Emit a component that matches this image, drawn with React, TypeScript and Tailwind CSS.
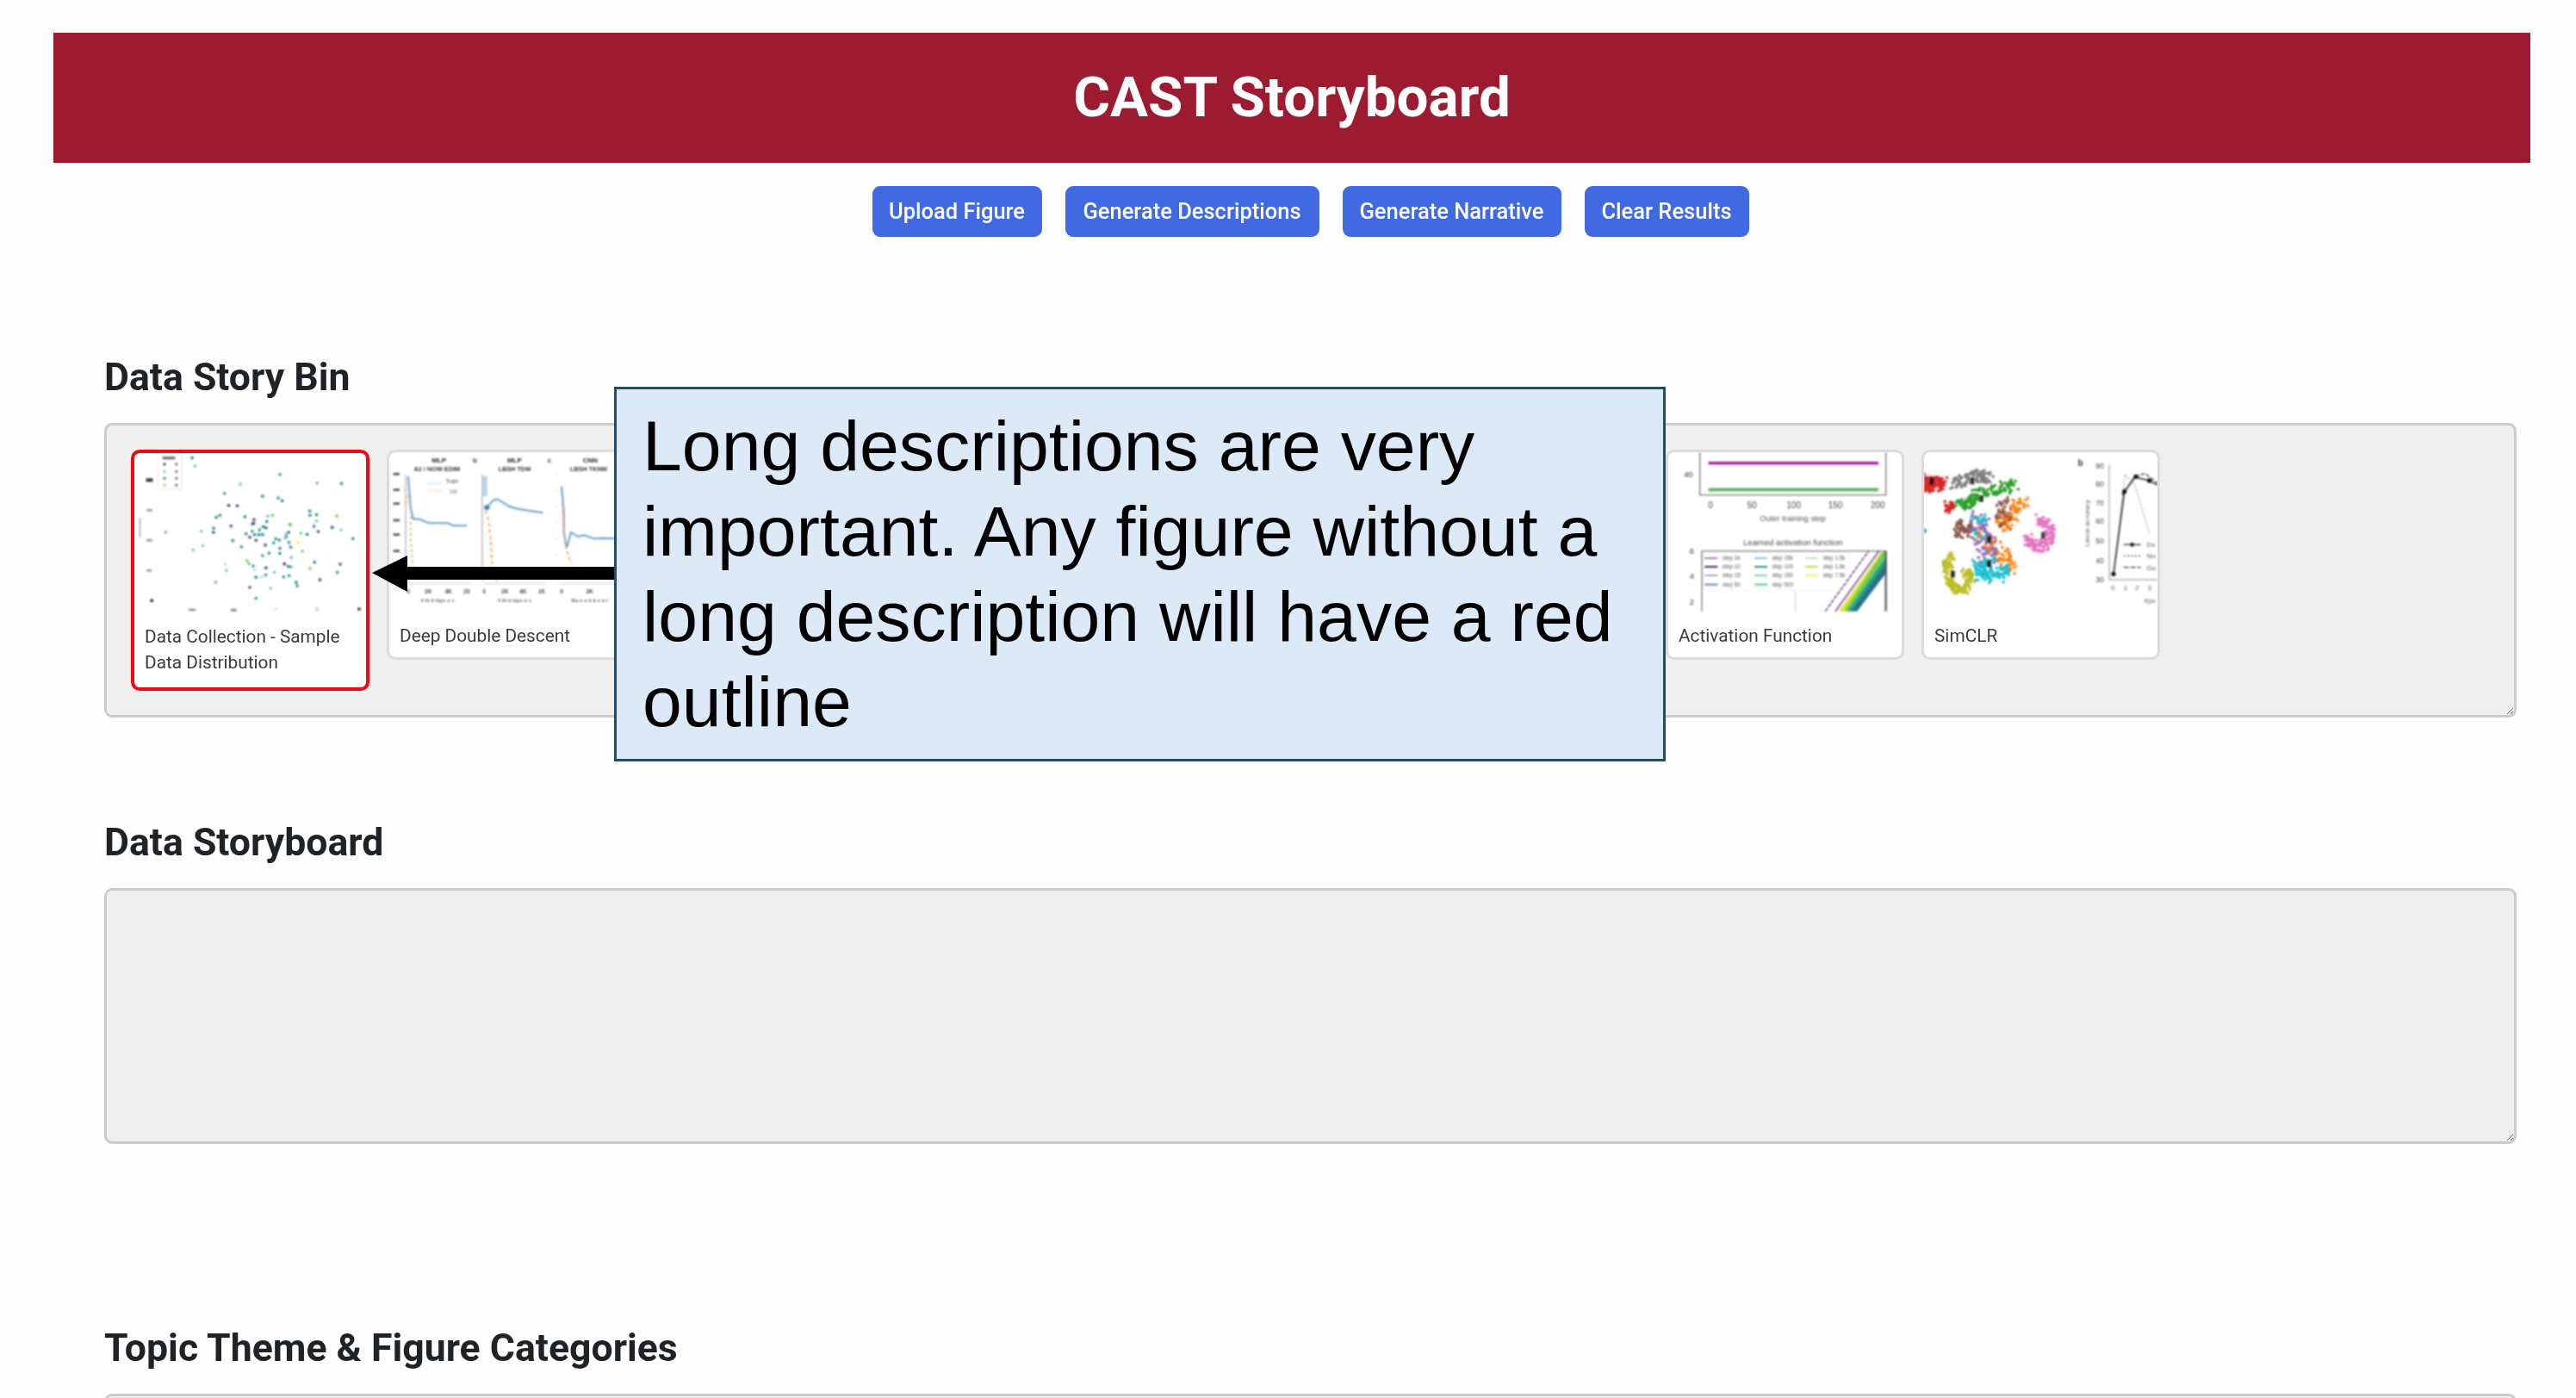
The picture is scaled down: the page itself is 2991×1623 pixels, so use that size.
import React from "react";

const C: Record<string, string> = {
  p: "#482878", b: "#3e4989", c: "#26828e", t: "#1f9e89", g: "#7cc4b4", l: "#6ece58", y: "#fde725", s: "#c3dbe0", m: "#8da0c4",
};

const POINTS: [number, number, string][] = [
  [220,38,"c"],[230,67,"g"],[529,96,"t"],[390,130,"g"],[660,127,"m"],[746,128,"c"],[334,163,"t"],[468,173,"c"],[523,179,"t"],[537,189,"c"],
  [349,205,"p"],[379,207,"b"],[318,240,"c"],[305,247,"c"],[406,245,"c"],[438,255,"b"],[486,243,"g"],[503,240,"l"],[634,225,"c"],[635,240,"c"],
  [658,238,"c"],[658,260,"g"],[729,242,"l"],[483,262,"c"],[565,272,"t"],[433,270,"b"],[357,278,"b"],[649,279,"c"],[713,283,"b"],[744,291,"g"],
  [127,299,"m"],[252,296,"g"],[296,285,"c"],[295,300,"b"],[431,296,"t"],[457,291,"t"],[470,280,"c"],[480,284,"b"],[410,305,"c"],[423,317,"b"],
  [440,308,"c"],[455,308,"c"],[468,308,"c"],[560,300,"b"],[552,315,"c"],[603,303,"l"],[625,307,"c"],[664,297,"b"],[786,322,"c"],[363,329,"c"],
  [445,328,"b"],[478,345,"b"],[514,323,"t"],[507,337,"t"],[527,327,"c"],[561,336,"t"],[593,336,"y"],[567,352,"c"],[258,347,"g"],[224,362,"g"],
  [394,351,"t"],[529,356,"c"],[491,373,"t"],[468,382,"t"],[529,374,"c"],[608,366,"l"],[569,388,"m"],[413,400,"l"],[420,410,"l"],[435,418,"t"],
  [440,432,"s"],[545,411,"p"],[480,425,"b"],[558,420,"t"],[567,421,"t"],[651,405,"c"],[741,412,"b"],[635,427,"l"],[731,441,"t"],[337,412,"s"],
  [341,434,"g"],[510,440,"g"],[479,450,"t"],[445,458,"c"],[465,458,"s"],[542,457,"t"],[561,452,"t"],[586,476,"c"],[590,488,"c"],[670,467,"b"],
  [303,476,"m"],[423,494,"b"],[496,497,"g"],[445,532,"t"],[550,305,"g"],[437,268,"b"],[565,275,"l"],[548,320,"g"],
];

function Scatter() {
  return (
    <svg viewBox="18 21 813 585" className="block w-[269px] h-[193px] blur-[1px]">
      <rect x="100" y="25" width="85" height="125" fill="none" stroke="#e4e4e4" strokeWidth="3" />
      {[60, 86, 110, 134].map((y, i) => (
        <g key={y}>
          <circle cx="123" cy={y} r="5" fill={["#482878", "#9db5d0", "#1f9e89", "#8fd860"][i]} />
          <rect x="160" y={y - 5} width="9" height="10" fill="#888" />
        </g>
      ))}
      <rect x="116" y="34" width="44" height="9" fill="#666" />
      {POINTS.map(([x, y, k], i) => (
        <circle key={i} cx={x} cy={y} r="5.5" fill={C[k]} />
      ))}
      <rect x="58" y="110" width="24" height="12" fill="#333" />
      <rect x="60" y="218" width="20" height="8" fill="#999" />
      <rect x="60" y="324" width="20" height="8" fill="#999" />
      <rect x="60" y="430" width="18" height="8" fill="#999" />
      <rect x="34" y="250" width="5" height="68" fill="#aaa" />
      <circle cx="78" cy="540" r="6" fill="#333" />
      <rect x="208" y="569" width="24" height="7" fill="#888" />
      <rect x="356" y="569" width="20" height="9" fill="#888" />
      <circle cx="515" cy="570" r="3" fill="#999" />
      <rect x="654" y="562" width="12" height="16" fill="#ddd" />
      <circle cx="808" cy="570" r="6" fill="#333" />
    </svg>
  );
}

function Descent() {
  return (
    <svg viewBox="22 21 813 585" className="block w-[271px] h-[195px] blur-[1px] font-['Liberation_Sans',sans-serif]">
      {[[195, "MLP"], [458, "MLP"], [722, "CNN"]].map(([x, s]) => (
        <text key={String(x)} x={x as number} y="58" textAnchor="middle" fontSize="24" fontWeight="700" fill="#222">{s as string}</text>
      ))}
      {[[188, "A2 / NOW EDIM"], [458, "LBSH TDM"], [716, "LBSH TKNM"]].map(([x, s]) => (
        <text key={String(x)} x={x as number} y="88" textAnchor="middle" fontSize="22" fontWeight="700" fill="#333">{s as string}</text>
      ))}
      <text x="320" y="58" textAnchor="middle" fontSize="24" fontWeight="700" fill="#333">b</text>
      <text x="580" y="58" textAnchor="middle" fontSize="24" fontWeight="700" fill="#333">c</text>
      {[97, 152, 200, 258, 308, 365].map((y) => (
        <rect key={y} x="36" y={y - 4} width="22" height="8" fill="#555" />
      ))}
      <rect x="76" y="100" width="6" height="370" fill="#c8c8c8" />
      <rect x="343" y="100" width="6" height="370" fill="#c8c8c8" />
      <rect x="345" y="104" width="18" height="70" fill="#b9d4ea" />
      <line x1="606" y1="95" x2="606" y2="470" stroke="#ddd" strokeWidth="3" strokeDasharray="6 50" />
      <path d="M155 130H205" stroke="#dce9f3" strokeWidth="5" />
      <path d="M155 155H205" stroke="#fbe3d0" strokeWidth="5" />
      <text x="240" y="130" textAnchor="middle" fontSize="20" fill="#555">Train</text>
      <text x="245" y="164" textAnchor="middle" fontSize="20" fill="#777">Val</text>
      <polyline points="88,105 96,210 105,253 130,255 160,268 225,268 245,277 292,277" fill="none" stroke="#5f9fd2" strokeWidth="6" />
      <polyline points="88,170 97,230 97,330 103,410 115,470" fill="none" stroke="#f6b27c" strokeWidth="6" strokeDasharray="10 9" />
      <polyline points="360,215 385,187 400,185 440,210 470,218 510,225 558,232" fill="none" stroke="#5f9fd2" strokeWidth="6" />
      <circle cx="362" cy="214" r="9" fill="#3f85c0" />
      <polyline points="358,225 368,260 375,320 380,410 397,470" fill="none" stroke="#f6a468" strokeWidth="6" strokeDasharray="12 10" />
      <polyline points="622,140 630,230 630,300 640,355 655,300 680,315 700,310 735,322 770,320 810,322" fill="none" stroke="#5f9fd2" strokeWidth="6" />
      <polyline points="625,200 632,320 640,360 655,410" fill="none" stroke="#f6a468" strokeWidth="6" strokeDasharray="12 9" />
      <path d="M85 478H310M352 478H565M615 478H820" stroke="#ccc" strokeWidth="3" />
      {[[88, "0"], [158, "2K"], [228, "4K"], [292, "20"], [352, "0"], [425, "2K"], [488, "4K"], [552, "20"], [622, "0"], [720, "2K"]].map(([x, s]) => (
        <text key={String(x)} x={x as number} y="512" textAnchor="middle" fontSize="20" fontWeight="700" fill="#444">{s as string}</text>
      ))}
      {[[190, "4 th b lays e s"], [458, "4 th b lays e s"], [720, "Ba n e h b e a t"]].map(([x, s]) => (
        <text key={String(x)} x={x as number} y="544" textAnchor="middle" fontSize="18" fontWeight="700" fill="#666">{s as string}</text>
      ))}
    </svg>
  );
}

function Activation() {
  const legend: [number, number, string, string][] = [
    [145, 390, "#a77fb5", "step 1k"], [145, 420, "#46216f", "step 10"], [145, 450, "#a69bd0", "step 15"], [145, 482, "#5a7fa8", "step 50"],
    [318, 390, "#8fbfd0", "step 15k"], [318, 420, "#1f8e8e", "step 100"], [318, 450, "#7fd0bb", "step 150"], [318, 482, "#52c585", "step 500"],
    [495, 390, "#bfe8a8", "step 1.5k"], [495, 420, "#c3dc26", "step 1.8k"], [495, 450, "#fdea70", "step 7.5k"],
  ];
  return (
    <svg viewBox="18 21 813 585" className="block w-[271px] h-[195px] blur-[1px] font-['Liberation_Sans',sans-serif]">
      <path d="M128 15V170H778M776 15V170" fill="none" stroke="#777" strokeWidth="4" />
      <rect x="158" y="54" width="592" height="10" fill="#9c1f9e" />
      <rect x="158" y="146" width="592" height="11" fill="#58b05e" />
      <text x="88" y="108" textAnchor="middle" fontSize="28" fill="#333">40</text>
      {[[165, "0"], [310, "50"], [455, "100"], [600, "150"], [748, "200"]].map(([x, s]) => (
        <text key={String(x)} x={x as number} y="216" textAnchor="middle" fontSize="30" fill="#444">{s as string}</text>
      ))}
      <text x="452" y="262" textAnchor="middle" fontSize="28" fill="#555">Outer training step</text>
      <text x="452" y="346" textAnchor="middle" fontSize="29" fill="#444">Learned activation function</text>
      <path d="M135 575V365H778V575" fill="none" stroke="#777" strokeWidth="4" />
      <line x1="460" y1="500" x2="460" y2="575" stroke="#ccc" strokeWidth="3" />
      <text x="100" y="376" textAnchor="middle" fontSize="28" fill="#333">6</text>
      <text x="100" y="461" textAnchor="middle" fontSize="28" fill="#333">4</text>
      <text x="100" y="551" textAnchor="middle" fontSize="28" fill="#333">2</text>
      <rect x="140" y="372" width="510" height="130" fill="#fff" stroke="#eee" strokeWidth="2" />
      {legend.map(([x, y, c, s]) => (
        <g key={s}>
          <line x1={x} y1={y} x2={x + 45} y2={y} stroke={c} strokeWidth="6" />
          <text x={x + 62} y={y + 7} fontSize="19" fill="#555">{s}</text>
        </g>
      ))}
      <line x1="565" y1="575" x2="716" y2="365" stroke="#7a4a9a" strokeWidth="5" strokeDasharray="14 4" />
      <line x1="600" y1="575" x2="752" y2="365" stroke="#7a4a9a" strokeWidth="5" />
      <polygon points="612,575 632,575 778,370 778,365 762,365" fill="#dfe32a" />
      <polygon points="630,575 645,575 778,390 778,365 768,365" fill="#6ecb5c" />
      <polygon points="643,575 658,575 778,410 778,385" fill="#22a284" />
      <polygon points="656,575 676,575 778,440 778,405" fill="#2b6f8e" />
      <rect x="772" y="365" width="6" height="210" fill="#555" opacity="0.8" />
    </svg>
  );
}

function rng(seed: number) {
  let s = seed;
  return () => {
    s = (s * 16807) % 2147483647;
    return s / 2147483647;
  };
}

type Cl = { c: string; r: number; n: number; p: [number, number][] };
const CLUSTERS: Cl[] = [
  { c: "#8c564b", r: 24, n: 45, p: [[300, 190], [280, 230], [290, 270]] },
  { c: "#ff7f0e", r: 26, n: 70, p: [[350, 190], [320, 240], [280, 275]] },
  { c: "#ff7f0e", r: 28, n: 45, p: [[285, 370], [315, 420], [240, 350]] },
  { c: "#8c564b", r: 20, n: 60, p: [[118, 268], [170, 295], [130, 310]] },
  { c: "#2ca02c", r: 20, n: 130, p: [[130, 205], [170, 200], [210, 160], [270, 150], [325, 135]] },
  { c: "#d62728", r: 18, n: 120, p: [[8, 100], [40, 125], [75, 125], [40, 145], [8, 140]] },
  { c: "#d62728", r: 16, n: 30, p: [[98, 200], [98, 225]] },
  { c: "#7f7f7f", r: 22, n: 100, p: [[110, 130], [170, 110], [205, 100], [235, 112]] },
  { c: "#17becf", r: 28, n: 90, p: [[190, 420], [220, 450], [250, 375]] },
  { c: "#17becf", r: 20, n: 35, p: [[270, 455], [295, 425]] },
  { c: "#17becf", r: 26, n: 30, p: [[200, 250], [210, 320]] },
  { c: "#9467bd", r: 36, n: 90, p: [[190, 240], [220, 330], [235, 375]] },
  { c: "#ff7f0e", r: 24, n: 20, p: [[190, 290], [250, 345]] },
  { c: "#bcbd22", r: 16, n: 150, p: [[105, 385], [90, 410], [100, 470], [115, 495], [150, 500], [172, 455], [155, 430]] },
  { c: "#e377c2", r: 19, n: 170, p: [[410, 250], [450, 290], [440, 340], [400, 352], [370, 320]] },
];

function Simclr() {
  const r = rng(12345);
  const pts: { x: number; y: number; c: string; o: number }[] = [];
  CLUSTERS.forEach((cl) => {
    for (let i = 0; i < cl.n; i++) {
      const f = r() * (cl.p.length - 1);
      const a = Math.min(Math.floor(f), cl.p.length - 2);
      const u = f - a;
      pts.push({
        x: cl.p[a][0] + (cl.p[a + 1][0] - cl.p[a][0]) * u + (r() - 0.5) * cl.r * 2,
        y: cl.p[a][1] + (cl.p[a + 1][1] - cl.p[a][1]) * u + (r() - 0.5) * cl.r * 2,
        c: cl.c,
        o: r(),
      });
    }
  });
  pts.sort((a, b) => a.o - b.o);
  return (
    <svg viewBox="10 21 813 585" className="block w-[271px] h-[195px] blur-[1px] font-['Liberation_Sans',sans-serif]">
      {pts.map((d, i) => (
        <circle key={i} cx={d.x} cy={d.y} r="5.5" fill={d.c} />
      ))}
      <circle cx="10" cy="295" r="9" fill="#3f8fc0" />
      {[[36, 122, "#111"], [178, 122, "#333"], [210, 182, "#333"], [186, 268, "#fff"], [236, 325, "#222"], [236, 410, "#111"], [110, 445, "#222"], [424, 310, "#444"]].map(([x, y, c]) => (
        <rect key={`${x}-${y}`} x={(x as number) - 6} y={(y as number) - 11} width="13" height="22" fill={c as string} />
      ))}
      <text x="555" y="70" textAnchor="middle" fontSize="30" fontWeight="700" fill="#333">b</text>
      {[[70, "90"], [133, "80"], [197, "70"], [262, "60"], [330, "50"], [398, "40"], [465, "30"]].map(([y, s]) => (
        <text key={String(y)} x="622" y={(y as number) + 9} textAnchor="middle" fontSize="26" fill="#444">{s as string}</text>
      ))}
      <text transform="translate(586 268) rotate(-90)" textAnchor="middle" fontSize="23" fill="#666">Linear accuracy</text>
      <path d="M655 65V465H840" fill="none" stroke="#888" strokeWidth="3" />
      <polyline points="670,445 710,98 745,135 795,305" fill="none" stroke="#aaa" strokeWidth="4" strokeDasharray="7 6" />
      <polyline points="700,170 745,105 780,95 835,138" fill="none" stroke="#333" strokeWidth="4" strokeDasharray="14 6" />
      <polyline points="670,445 708,158 745,108 795,120 835,142" fill="none" stroke="#333" strokeWidth="5" />
      {[[670, 445], [708, 158], [748, 106], [795, 120]].map(([x, y]) => (
        <circle key={x} cx={x} cy={y} r="8" fill="#111" />
      ))}
      <line x1="705" y1="343" x2="765" y2="343" stroke="#333" strokeWidth="4" />
      <circle cx="735" cy="343" r="7" fill="#111" />
      <line x1="705" y1="382" x2="765" y2="382" stroke="#555" strokeWidth="4" strokeDasharray="7 6" />
      <line x1="705" y1="422" x2="765" y2="422" stroke="#333" strokeWidth="4" strokeDasharray="18 6" />
      <text x="786" y="352" fontSize="24" fill="#555">Dv</text>
      <text x="786" y="391" fontSize="24" fill="#555">No</text>
      <text x="786" y="431" fontSize="24" fill="#555">Du</text>
      {[[668, "0"], [712, "1"], [752, "2"], [795, "3"]].map(([x, s]) => (
        <text key={String(x)} x={x as number} y="500" textAnchor="middle" fontSize="24" fill="#555">{s as string}</text>
      ))}
      <text x="778" y="545" fontSize="22" fill="#555">Epo</text>
    </svg>
  );
}

function Card({ title, red, children }: { title?: string; red?: boolean; children?: React.ReactNode }) {
  return (
    <div
      className={
        red
          ? "w-[277px] h-[280px] shrink-0 overflow-hidden rounded-[10px] border-[4px] border-[#f5070d] bg-white"
          : "w-[277px] h-[244px] shrink-0 overflow-hidden rounded-[10px] border-[3px] border-[#dcdcdc] bg-white"
      }
    >
      <div className="h-[195px]">{children}</div>
      {title && (
        <div className="pl-[12px] pt-[3px] text-[20.8px] leading-[30px] text-[#3b3b3b] blur-[0.6px]">
          {title}
        </div>
      )}
    </div>
  );
}

function Heading({ children, className }: { children: React.ReactNode; className: string }) {
  return <h2 className={`text-[44.6px] leading-[52px] font-bold text-[#1f2328] blur-[0.5px] ${className}`}>{children}</h2>;
}

const BTNS = [
  ["Upload Figure", "w-[197px]"],
  ["Generate Descriptions", "w-[295px]"],
  ["Generate Narrative", "w-[254px]"],
  ["Clear Results", "w-[191px]"],
];

export default function App() {
  return (
    <div className="relative h-[1623px] overflow-hidden bg-[#fefefe] pt-[38px] font-['Roboto',sans-serif]">
      <header className="ml-[62px] mr-[53px] flex h-[151px] items-center justify-center bg-[#9c1b30]">
        <h1 className="text-[65.5px] font-bold text-white blur-[0.5px]">CAST Storyboard</h1>
      </header>

      <div className="mt-[27px] flex justify-center gap-[27px] pl-[52px]">
        {BTNS.map(([b, w]) => (
          <button key={b} className={`${w} h-[59px] rounded-[9px] bg-[#4169e1] text-[25.5px] font-medium text-white`}>
            <span className="block blur-[0.5px]">{b}</span>
          </button>
        ))}
      </div>

      <main className="ml-[121px] mr-[69px]">
        <Heading className="mt-[137px] mb-[27px]">Data Story Bin</Heading>
        <div className="flex h-[342px] resize items-start gap-[20px] overflow-auto rounded-[9px] border-[3px] border-[#cccccc] bg-[#efefef] pl-[28px] pt-[28px]">
          <Card red title="Data Collection - Sample Data Distribution"><Scatter /></Card>
          <Card title="Deep Double Descent"><Descent /></Card>
          <Card />
          <Card />
          <Card />
          <Card />
          <Card title="Activation Function"><Activation /></Card>
          <Card title="SimCLR"><Simclr /></Card>
        </div>

        <Heading className="mt-[119px] mb-[27px]">Data Storyboard</Heading>
        <div className="h-[297px] resize overflow-auto rounded-[9px] border-[3px] border-[#cccccc] bg-[#efefef]" />

        <Heading className="mt-[211px] mb-[27px]">{"Topic Theme & Figure Categories"}</Heading>
        <div className="h-[300px] rounded-[9px] border-[3px] border-[#cccccc] bg-[#efefef]" />
      </main>

      <svg viewBox="0 0 290 50" className="absolute left-[430px] top-[641px] h-[50px] w-[290px]">
        <polygon points="2,24 43,4 43,17 290,17 290,32 43,32 43,46" fill="#000" />
      </svg>

      <div className="absolute left-[713px] top-[449px] h-[435px] w-[1221px] border-[3px] border-[#0f5672] bg-[#dce9f7] pl-[30px] pt-[16px] font-['Liberation_Sans',sans-serif] text-[82.4px] leading-[99px] text-black">
        Long descriptions are very
        <br />
        important. Any figure without a
        <br />
        long description will have a red
        <br />
        outline
      </div>
    </div>
  );
}
